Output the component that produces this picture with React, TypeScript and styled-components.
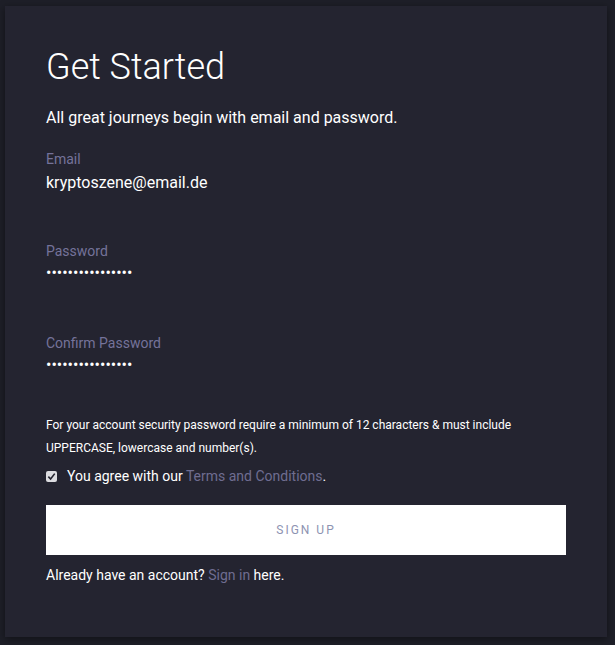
import React from 'react';
import styled, { createGlobalStyle } from 'styled-components';

const GlobalStyle = createGlobalStyle`
    html, body {
        margin: 0;
        padding: 0;
        background: #1e1f28;
        font-family: Roboto, "Liberation Sans", sans-serif;
    }
`;

export default function App() {
    return (
        <Page>
            <GlobalStyle />
            <Card>
                <Title>Get Started</Title>
                <Lead>All great journeys begin with email and password.</Lead>

                <Fields>
                    <Field>
                        <Label>Email</Label>
                        <Value>kryptoszene@email.de</Value>
                    </Field>
                    <Field>
                        <Label>Password</Label>
                        <Dots>••••••••••••••••</Dots>
                    </Field>
                    <Field>
                        <Label>Confirm Password</Label>
                        <Dots>••••••••••••••••</Dots>
                    </Field>
                </Fields>

                <Note>
                    For your account security password require a minimum of 12 characters &amp; must include
                    UPPERCASE, lowercase and number(s).
                </Note>

                <AgreeRow>
                    <Check>
                        <svg width="9" height="9" viewBox="0 0 10 10">
                            <path d="M1.5 5.2 L4 7.8 L8.6 1.8" stroke="#24242f" strokeWidth="1.8" fill="none" />
                        </svg>
                    </Check>
                    <span>You agree with our <Link>Terms and Conditions</Link>.</span>
                </AgreeRow>

                <SignUpButton>SIGN UP</SignUpButton>

                <Footer>
                    Already have an account? <Link>Sign in</Link> here.
                </Footer>
            </Card>
        </Page>
    );
}

const Page = styled.div`
    width: 615px;
    height: 645px;
    padding: 6px 8px 8px 5px;
    box-sizing: border-box;
    overflow: hidden;
`;

const Card = styled.div`
    height: 631px;
    background: #242430;
    box-shadow: 0 2px 8px rgba(0, 0, 0, 0.45);
    padding: 38px 41px 0 41px;
    box-sizing: border-box;
    display: flex;
    flex-direction: column;
    color: #ffffff;
`;

const Title = styled.h1`
    margin: 0;
    font-size: 36px;
    font-weight: 300;
    line-height: 46px;
    color: #ffffff;
`;

const Lead = styled.p`
    margin: 17px 0 21px 0;
    font-size: 16px;
    line-height: 22px;
    font-weight: 400;
`;

const Fields = styled.div`
    display: flex;
    flex-direction: column;
    gap: 34px;
`;

const Field = styled.div`
    display: flex;
    flex-direction: column;
    height: 58px;
`;

const Label = styled.div`
    font-size: 14px;
    line-height: 18px;
    color: #75739a;
`;

const Value = styled.div`
    margin-top: 5px;
    font-size: 16px;
    line-height: 20px;
    color: #ffffff;
`;

const Dots = styled.div`
    margin-top: 3px;
    font-size: 16px;
    line-height: 20px;
    letter-spacing: 0;
    color: #ffffff;
`;

const Note = styled.p`
    margin: 22px 0 0 0;
    font-size: 12px;
    line-height: 23px;
    color: #ffffff;
    width: 500px;
`;

const AgreeRow = styled.div`
    display: flex;
    align-items: center;
    gap: 10px;
    margin-top: 6px;
    font-size: 14px;
    line-height: 20px;
`;

const Check = styled.span`
    width: 11px;
    height: 11px;
    background: #dcdce0;
    border-radius: 2px;
    display: flex;
    align-items: center;
    justify-content: center;
`;

const Link = styled.span`
    color: #6f6d90;
`;

const SignUpButton = styled.button`
    margin-top: 19px;
    height: 50px;
    width: 520px;
    border: none;
    background: #ffffff;
    color: #8e93b2;
    font-family: Roboto, "Liberation Sans", sans-serif;
    font-size: 12px;
    letter-spacing: 2px;
`;

const Footer = styled.div`
    margin-top: 10px;
    font-size: 14px;
    line-height: 20px;
`;
